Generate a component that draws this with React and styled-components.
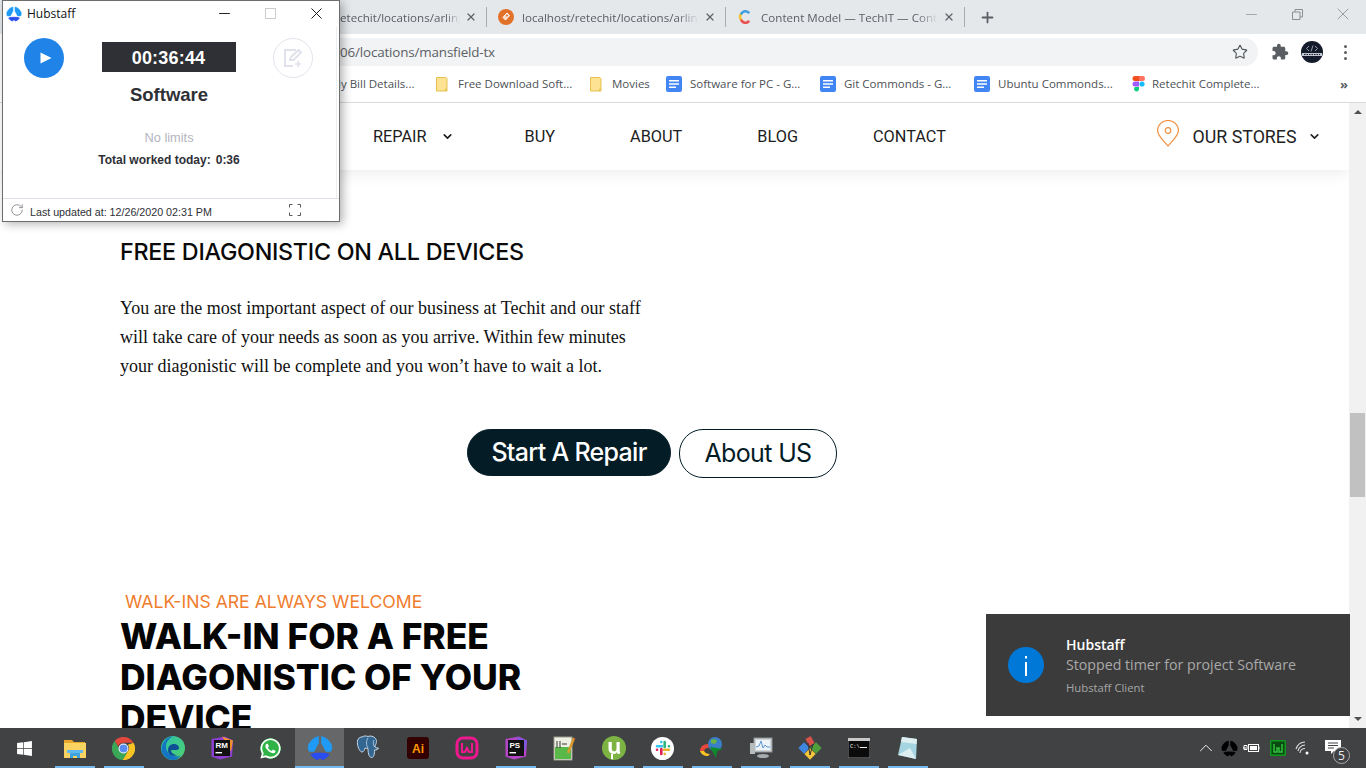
import React from "react";
import styled, { createGlobalStyle } from "styled-components";
import { ChevronDown, ChevronUp, Star, Plus, X, Minus, RotateCw } from "lucide-react";
import { FaWhatsapp, FaWindows } from "react-icons/fa";

const Global = createGlobalStyle`
  html, body { margin: 0; padding: 0; width: 1366px; height: 768px; overflow: hidden; background: #fff; }
  * { box-sizing: border-box; }
`;

const Screen = styled.div`
  position: relative; width: 1366px; height: 768px; overflow: hidden;
  display: flex; flex-direction: column; background: #fff;
  font-family: "Open Sans", sans-serif;
`;
/* Browser chrome */
const TabStrip = styled.div`
  height: 34px; background: #e5e8eb; display: flex; align-items: center; flex: none; padding-left: 340px;
`;
const Tab = styled.div`
  width: ${p => p.$w ?? 238}px; height: 34px; display: flex; align-items: center; flex: none;
  padding: 0 8px 0 ${p => p.$pad ?? 11}px; color: #5a5e63;
`;
const TabSep = styled.div`
  width: 1px; height: 20px; flex: none; background: #a8acb0; margin-top: -1px;
`;
const TabTitle = styled.span`
  margin-left: ${p => p.$gap ?? 0}px; flex: 1; min-width: 0; white-space: nowrap; font-size: 11.6px;
  -webkit-mask-image: linear-gradient(90deg, #000 88%, transparent 100%);
  mask-image: linear-gradient(90deg, #000 88%, transparent 100%);
`;
const TabClose = styled.span`
  display: flex; color: #5f6368; margin: 0 1px 0 5px; width: 12px; flex: none;
`;
const NewTab = styled.div`
  display: flex; color: #5a5e63; margin-left: 14px;
`;
const WinControls = styled.div`
  margin-left: auto; display: flex; align-items: center; height: 30px; margin-top: -6px; color: #8a8d90;
`;
const WinBtn = styled.div`
  width: 46px; display: flex; justify-content: center; align-items: center;
`;
const Toolbar = styled.div`
  height: 33px; background: #fff; display: flex; align-items: center; flex: none; padding: 0 12px 0 84px;
`;
const Omnibox = styled.div`
  width: 1174px; height: 28px; margin-top: 3px; border-radius: 14px; background: #f1f3f4; flex: none;
  display: flex; align-items: center; padding: 0 8px 0 256px; color: #5b5f64;
  font: 13.4px "Open Sans", sans-serif; letter-spacing: -0.15px;
`;
const OmniStar = styled.span`
  margin-left: auto; display: flex; color: #55595e; margin-right: 2px;
`;
const ToolIcons = styled.div`
  display: flex; align-items: center; margin-left: 13px; margin-top: 3px; color: #5a5e63;
`;
const Avatar = styled.div`
  width: 22px; height: 22px; border-radius: 50%; background: #141c2c; margin-left: 12px; overflow: hidden; display: flex;
`;
const Dots = styled.div`
  margin-left: 21px; display: flex; flex-direction: column; gap: 3px;
  & > i { width: 3px; height: 3px; border-radius: 50%; background: #5a5e63; display: block; }
`;
const Bookmarks = styled.div`
  height: 36px; flex: none; background: #fff; border-bottom: 1px solid #d9dadb;
  display: flex; align-items: center; padding: 0 19px 2px 338px;
  font: 11.5px "Open Sans", sans-serif; color: #4d5156;
`;
const Bookmark = styled.div`
  width: ${p => p.$w}px; flex: none; display: flex; align-items: center; white-space: nowrap; gap: ${p => p.$gap ?? 8}px;
`;
const MoreMarks = styled.div`
  margin-left: auto; color: #5a5e63; font-size: 13px; font-weight: 700; letter-spacing: -1px;
`;
/* Page */
const Viewport = styled.div`
  flex: 1; min-height: 0; display: flex;
`;
const Page = styled.div`
  flex: 1; min-width: 0; overflow: hidden; display: flex; flex-direction: column;
`;
const Nav = styled.nav`
  height: 67px; flex: none; display: flex; align-items: center; padding: 0 28px 0 373px; gap: 75px;
  box-shadow: 0 4px 14px rgba(0,0,0,.07); font: 16.3px Roboto, sans-serif; color: #1d1d1d;
`;
const NavItem = styled.div`
  display: flex; align-items: center; gap: 14px; white-space: nowrap;
  & > svg { margin-right: -4px; }
`;
const Stores = styled.div`
  margin-left: auto; display: flex; align-items: center; font-size: 17.8px; color: #222;
`;
const PinIcon = styled.svg`
  margin-top: -6px; flex: none;
`;
const StoreLabel = styled.span`
  margin: 0 11.5px 0 14px;
`;
const Section = styled.section`
  padding: 64px 0 0 120px;
`;
const SubHead = styled.h3`
  margin: 0; font: 500 23.3px/36px Inter, sans-serif; color: #0a0a0a; white-space: nowrap; letter-spacing: -0.26px;
`;
const Para = styled.p`
  margin: 24px 0 0; width: 540px; font: 18px/29px "Liberation Serif", serif; color: #111;
`;
const Actions = styled.div`
  display: flex; align-items: flex-start; gap: 8px; margin: 48px 0 0 347px;
`;
const Pill = styled.div`
  height: ${p => (p.$solid ? 47 : 49)}px; width: ${p => (p.$solid ? 204 : 158)}px; border-radius: 24px;
  border: 1px solid #031c26; background: ${p => (p.$solid ? "#031c26" : "#fff")};
  color: ${p => (p.$solid ? "#fff" : "#031c26")}; padding-bottom: 2px;
  display: flex; align-items: center; justify-content: center;
  font: ${p => (p.$solid ? 500 : 400)} 25px Inter, sans-serif; letter-spacing: ${p => (p.$solid ? -0.7 : -0.65)}px;
`;
const Kicker = styled.div`
  margin: 113px 0 0 5px; font: 17.6px/22px Inter, sans-serif; color: #ef7d2d; white-space: nowrap;
`;
const BigHead = styled.h2`
  margin: 3px 0 0; width: 440px; font: 800 35.4px/41px Inter, sans-serif; color: #050505;
`;
/* Scrollbar */
const ScrollBar = styled.div`
  width: 17px; flex: none; background: #f1f1f1; display: flex; flex-direction: column; align-items: center;
`;
const Arrow = styled.div`
  width: 0; height: 0; flex: none; border-left: 4px solid transparent; border-right: 4px solid transparent;
  ${p => p.$down ? "border-top: 4px solid #505050; margin: auto 0 7px;" : "border-bottom: 4px solid #505050; margin-top: 7px;"}
`;
const Thumb = styled.div`
  width: 15px; height: 84px; flex: none; background: #c1c1c1; margin-top: 299px;
`;
/* Taskbar */
const Taskbar = styled.div`
  height: 40px; flex: none; background: #404244; display: flex; align-items: stretch; color: #fff;
`;
const Start = styled.div`
  width: 50px; display: flex; align-items: center; justify-content: center; padding-right: 2px;
`;
const TaskItem = styled.div`
  width: 49px; position: relative; display: flex; align-items: center; justify-content: center;
  background: ${p => (p.$active ? "#656768" : "transparent")};
  &::after {
    content: ""; position: absolute; bottom: 0; height: 2px; background: #76b9ed;
    left: ${p => (p.$active ? 0 : 4.5)}px; right: ${p => (p.$active ? 0 : 4.5)}px;
    display: ${p => (p.$open ? "block" : "none")};
  }
`;
const Tray = styled.div`
  margin-left: auto; display: flex; align-items: center; padding-right: 15px;
`;
const TraySlot = styled.div`
  width: ${p => p.$w}px; display: flex; justify-content: center; align-items: center; position: relative;
`;
const NotifGlyph = styled.svg`
  margin-top: -2px;
`;
const NotifBadge = styled.span`
  position: absolute; right: 1px; bottom: -9px; width: 17px; height: 17px; border-radius: 50%;
  border: 1px solid #aaa; background: #404244; color: #eee; font: 12px/15px "Open Sans", sans-serif; text-align: center;
`;
const WaBadge = styled.div`
  width: 23px; height: 23px; border-radius: 50%; display: flex; align-items: center; justify-content: center;
  background: radial-gradient(circle, #2fb344 62%, transparent 64%);
`;
const SlackBadge = styled.div`
  width: 23px; height: 23px; border-radius: 50%; background: #fff; display: flex; align-items: center; justify-content: center;
`;
/* Toast */
const Toast = styled.div`
  position: absolute; right: 16px; bottom: 52px; width: 364px; height: 102px; background: #3b3b3b;
  display: flex; align-items: center; padding-left: 22px;
`;
const ToastBody = styled.div`
  margin-left: 22px; display: flex; flex-direction: column; font-family: "Open Sans", sans-serif;
`;
const ToastTitle = styled.div`
  font-size: 14px; font-weight: 600; line-height: 20px; color: #fff;
`;
const ToastText = styled.div`
  font-size: 14.2px; line-height: 20px; color: #a9a9a9;
`;
const ToastApp = styled.div`
  font-size: 11.3px; line-height: 16px; color: #a6a6a6; margin-top: 5px;
`;
/* Hubstaff window */
const HubWindow = styled.div`
  position: absolute; left: 2px; top: 0; width: 338px; height: 222px; background: #fff;
  border: 1px solid #6d6d6d; display: flex; flex-direction: column; padding-bottom: 1px;
  box-shadow: 3px 2px 9px rgba(0,0,0,.3); font-family: "Liberation Sans", sans-serif; color: #2e3036;
`;
const HubTitle = styled.div`
  height: 25px; flex: none; display: flex; align-items: center; padding-left: 3px; font: 12px "Open Sans", sans-serif; color: #111;
`;
const HubName = styled.span`
  margin-left: 5px;
`;
const HubControls = styled.div`
  margin-left: auto; display: flex; align-items: center; color: #111;
`;
const HubCtl = styled.div`
  width: 46px; display: flex; justify-content: center;
`;
const HubBody = styled.div`
  flex: 1; margin: 0 2px 0 0; padding-right: 1px; border-right: 1px solid #eceef2; display: flex; flex-direction: column; align-items: center;
`;
const HubTop = styled.div`
  width: 100%; display: flex; align-items: center; justify-content: space-between; padding: 12px 22px 0 21px;
`;
const CircleBtn = styled.div`
  width: 40px; height: 40px; border-radius: 50%; display: flex; align-items: center; justify-content: center;
  background: ${p => (p.$primary ? "#1f83e8" : "#fff")}; border: ${p => (p.$primary ? "none" : "1px solid #e1e4ec")};
  padding-left: ${p => (p.$primary ? 4 : 0)}px;
`;
const Timer = styled.div`
  width: 134px; height: 30px; background: #2e3036; color: #fff; font-weight: 700; font-size: 18px; margin-bottom: 2px; padding-top: 3px;
  display: flex; align-items: center; justify-content: center; letter-spacing: .2px;
`;
const Project = styled.div`
  font-size: 18.5px; font-weight: 700; line-height: 22px; margin-top: 6px;
`;
const Limits = styled.div`
  font-size: 12.8px; line-height: 14px; color: #b2b5bd; margin-top: 25px;
`;
const Worked = styled.div`
  font-size: 12px; font-weight: 700; line-height: 14px; margin-top: 8px; display: flex; gap: 5px;
`;
const HubFooter = styled.div`
  height: 22px; flex: none; border-top: 1px solid #dde0e6; display: flex; align-items: center; padding: 1px 38px 0 7px;
  font-size: 10.7px; color: #2e3036;
`;
const Updated = styled.span`
  margin-left: 6px; margin-top: 4px; white-space: nowrap;
`;
const Expand = styled.span`
  margin-left: auto; display: flex;
`;

const HubLogo = ({ size = 16, top = "#1f9bf5", bottom = "#2a4df0" }) => (
  <svg width={size} height={size} viewBox="0 0 24 24" strokeLinejoin="round">
    <path d="M10.500 1.500C7 2 4 4.500 1.500 9 1 11 1 13 2 15L6.500 15 10.500 7.500Z" fill={top} stroke={top} strokeWidth=".8" />
    <path d="M13.500 1.500C17 2 20 4.500 22.500 9 23 11 23 13 22 15L17.500 15 13.500 7.500Z" fill={top} stroke={top} strokeWidth=".8" />
    <path d="M4 18 8 17 16 17 20 18 18 20.500 14.500 22.500 12 20.500 9.500 22.500 6 20.500Z" fill={bottom} stroke={bottom} strokeWidth="1.200" />
  </svg>
);
const Doc = () => (
  <svg width="16" height="16" viewBox="0 0 16 16"><rect width="16" height="16" rx="2" fill="#4285f4" /><path d="M3 4h10v1.600H3zM3 7.200h10v1.600H3zM3 10.400h7V12H3z" fill="#fff" /></svg>
);
const Folder = () => (
  <svg width="16" height="16" viewBox="0 0 16 16"><path d="M.5 1.500h9.500l1 1v12.500H.5z" fill="#fde293" stroke="#e6c14f" /><path d="M9.500 15v-2h1.500" fill="none" stroke="#e6c14f" /></svg>
);
const Figma = () => (
  <svg width="16" height="16" viewBox="0 0 12 16">
    <path d="M2 0h4v5H2a2.500 2.500 0 010-5z" fill="#f24e1e" /><path d="M6 0h3.500a2.500 2.500 0 010 5H6z" fill="#ff7262" />
    <path d="M2 5.500h4v5H2a2.500 2.500 0 010-5z" fill="#a259ff" /><circle cx="9" cy="8" r="2.600" fill="#1abcfe" />
    <path d="M2 11h4v2.500a2.500 2.500 0 11-4-2.500z" fill="#0acf83" />
  </svg>
);
const XamppFav = () => (
  <svg width="16" height="16" viewBox="0 0 16 16"><circle cx="8" cy="8" r="8" fill="#e2722a" /><path d="M5 8.500 9 4l2.500 2.500L7.500 11z" fill="#f7d9c2" stroke="#fff" strokeWidth="1" /><circle cx="9" cy="6.500" r="1" fill="#e2722a" /></svg>
);
const ContentfulFav = () => (
  <svg width="14" height="14" viewBox="0 0 14 14" fill="none" strokeWidth="2.500" strokeLinecap="round">
    <path d="M3 9.500A4.500 4.500 0 013 4" stroke="#f2c230" /><path d="M3.500 3.500A4.500 4.500 0 0110.500 2.500" stroke="#3c9fe0" /><path d="M3.500 10.500A4.500 4.500 0 0010.500 11.500" stroke="#e8504f" />
  </svg>
);
const ExtensionIcon = () => (
  <svg width="18" height="18" viewBox="0 0 24 24" fill="currentColor">
    <path d="M20.500 11H19V7c0-1.100-.9-2-2-2h-4V3.500C13 2.120 11.880 1 10.500 1S8 2.120 8 3.500V5H4c-1.100 0-1.990.9-1.990 2v3.800H3.500c1.490 0 2.700 1.210 2.700 2.700s-1.210 2.700-2.700 2.700H2V20c0 1.100.9 2 2 2h3.800v-1.500c0-1.490 1.210-2.700 2.700-2.700 1.490 0 2.700 1.210 2.700 2.700V22H17c1.100 0 2-.9 2-2v-4h1.500c1.380 0 2.500-1.120 2.500-2.500S21.880 11 20.500 11z" />
  </svg>
);
const AvatarArt = () => (
  <svg width="22" height="22" viewBox="0 0 22 22">
    <path d="M8 5 5.500 7.500 8 10M14 5 16.500 7.500 14 10M12 4.500l-2 6" stroke="#cdd3dd" strokeWidth=".7" fill="none" />
    <rect x="1" y="12" width="20" height="3" fill="#dfe3ea" opacity=".85" />
    <path d="M3 13.500h16" stroke="#141c2c" strokeWidth="1.200" strokeDasharray="1.500 1" />
  </svg>
);
const PinGlyph = () => (
  <PinIcon width="22" height="27" viewBox="0 0 22 27" fill="none" stroke="#f08f3e" strokeWidth="1.200">
    <path d="M11 26C7 21 .6 16 .6 10.500a10.400 10 0 0120.800 0C21.400 16 15 21 11 26z" /><circle cx="11" cy="10.500" r="2.800" />
  </PinIcon>
);
const Explorer = () => (
  <svg width="24" height="24" viewBox="0 0 24 24">
    <path d="M1 4h8l2 2h11v3H1z" fill="#e8a92b" /><rect x="1" y="7" width="22" height="15" fill="#fbd360" />
    <path d="M7 17h10v5h-3v-2h-4v2H7z" fill="#3fa3e0" /><rect x="4" y="14" width="16" height="3" fill="#5fb9ec" />
  </svg>
);
const Chrome = () => (
  <svg width="23" height="23" viewBox="0 0 24 24">
    <path d="M12 0a12 12 0 0110.400 6H12a6 6 0 00-5.600 3.800L2.800 4.200A12 12 0 0112 0z" fill="#e4483c" />
    <path d="M22.400 6A12 12 0 0111 24l5.200-8.500A6 6 0 0016.500 8z" fill="#f9c423" />
    <path d="M11 24A12 12 0 012.800 4.200L8 13a6 6 0 008.200 2.500z" fill="#3aa757" />
    <circle cx="12" cy="12" r="5.200" fill="#fff" /><circle cx="12" cy="12" r="4.200" fill="#5a8bf0" />
  </svg>
);
const Edge = () => (
  <svg width="24" height="24" viewBox="0 0 24 24">
    <defs><linearGradient id="eg" x1="0" y1="0" x2="1" y2="1"><stop offset="0" stopColor="#2bc2a8" /><stop offset="1" stopColor="#4fd06f" /></linearGradient></defs>
    <circle cx="12" cy="12" r="12" fill="url(#eg)" />
    <path d="M0.500 13C1 6 6 .5 12 .5c-4 2-7 5-7 10 0 6 5 10 11 10 2 0 3-.5 4-1-2.500 3-5 4.500-8 4.500-6 0-11.500-5-11.500-11z" fill="#1475c4" />
    <path d="M7 14c0-4 3-6 6-6 3 0 5 2 5 4 0 1-1 2-3 2H10c0 3 3 5 7 5-5 2-10 0-10-5z" fill="#0f4f96" />
  </svg>
);
const JetBrains = ({ label, c1, c2 }) => (
  <svg width="24" height="24" viewBox="0 0 24 24">
    <path d="M1.500 3 15 .5l8 4-1 16-12 3-8.500-3z" fill={c1} /><path d="M12 .5l11 4-2 11z" fill={c2} />
    <rect x="4" y="4" width="16" height="16" fill="#111" />
    <text x="5.500" y="12" fill="#fff" fontSize="8" fontWeight="700" fontFamily="Liberation Sans">{label}</text>
    <rect x="5.500" y="16" width="6.500" height="1.400" fill="#fff" />
  </svg>
);
const Illustrator = () => (
  <svg width="22" height="22" viewBox="0 0 22 22"><rect width="22" height="22" rx="3" fill="#320000" /><text x="11" y="15.500" textAnchor="middle" fill="#ff9a00" fontSize="12" fontWeight="700" fontFamily="Liberation Sans">Ai</text></svg>
);
const Elephant = () => (
  <svg width="25" height="26" viewBox="0 0 25 26">
    <path d="M6 2C2.500 2 1 5 1.500 9c.5 4 2.500 8 4.500 8 1.500 0 2.500-2 3-4 1 .5 2 .5 3 .5 0 3 .5 9 3.500 9 2.500 0 3-3.500 3-7.500 2 0 3.500-.5 4-2-2 0-3.500 0-3.500-2 1-2 2.500-5 .5-7.500C17.500 1 14 .5 12 1.500 10 .5 7.500 1 6 2z" fill="#336791" stroke="#c9d8e8" strokeWidth="1" />
    <path d="M12 3c-2 3-2 7 0 10M18 5c-1 2-1 4 .5 7" fill="none" stroke="#c9d8e8" strokeWidth=".8" />
  </svg>
);
const Wamp = () => (
  <svg width="24" height="24" viewBox="0 0 24 24"><rect x="2" y="2" width="20" height="20" rx="6" fill="none" stroke="#f0188f" strokeWidth="3" /><path d="M7 7v9h3l2-4 2 4h3V7" fill="none" stroke="#f0188f" strokeWidth="2" /></svg>
);
const NotepadPP = () => (
  <svg width="24" height="26" viewBox="0 0 24 26">
    <rect x="1" y="2" width="18" height="23" fill="#eef0e4" stroke="#9a9a88" /><rect x="2" y="12" width="16" height="12" fill="#58b848" />
    <path d="M4 6v7M7 6v7M9 9h5" stroke="#333" strokeWidth="1" /><path d="M21 3 15 18" stroke="#d89a2c" strokeWidth="2.500" /><path d="M21 3l1.500.6-1 1.800z" fill="#d8443c" />
  </svg>
);
const Torrent = () => (
  <svg width="24" height="24" viewBox="0 0 24 24">
    <circle cx="12" cy="12" r="12" fill="#7cb342" />
    <path d="M6.500 6v7a5 5 0 005 5c2 0 3-1 3.500-2l.5 2 3-.5c-.5-1-.8-2-.8-4V6h-3.200v7c0 1.500-1 2.300-2.300 2.300S9.800 14.500 9.800 13V6z" fill="#fff" />
    <path d="M9 18v5l2 .5V18z" fill="#fff" />
  </svg>
);
const SlackGlyph = () => (
  <svg width="16" height="16" viewBox="0 0 16 16" fill="none" strokeWidth="2.600" strokeLinecap="round">
    <path d="M2 6.300h5M6.300 2v.1" stroke="#36c5f0" /><path d="M9.700 2v5M14 6.300h-.1" stroke="#2eb67d" />
    <path d="M14 9.700H9M9.700 14v-.1" stroke="#ecb22e" /><path d="M6.300 14V9M2 9.700h.1" stroke="#e01e5a" />
  </svg>
);
const Idm = () => (
  <svg width="26" height="24" viewBox="0 0 26 24">
    <path d="M1 15c0-4 3-7 8-7l4 3-5 1c-2 .5-3 2-3 4z" fill="#e4483c" /><path d="M1 15c1 3 4 5 8 5l2-2c-3 0-5-1-6-3z" fill="#f9c423" />
    <circle cx="16" cy="8" r="7" fill="#3a7fc8" /><path d="M12 4c2-1 5-1 6 1l-2 3-4-1z" fill="#6cb33f" />
    <path d="M11 11l13 2-6 2-1 7z" fill="#0c8c2c" />
  </svg>
);
const Monitor = () => (
  <svg width="24" height="24" viewBox="0 0 24 24">
    <rect x="5" y="2" width="18" height="14" fill="#cfd4d8" stroke="#8c9296" /><rect x="7" y="4" width="14" height="10" fill="#eef3f7" />
    <path d="M7 11l3-1 2-5 2 7 2-3 2 2h3" fill="none" stroke="#4a8fd0" strokeWidth=".9" />
    <rect x="1" y="7" width="5" height="11" fill="#b6bbbe" /><ellipse cx="14" cy="20" rx="6" ry="2" fill="#a7acaf" />
  </svg>
);
const GitGui = () => (
  <svg width="26" height="26" viewBox="0 0 26 26">
    <rect x="3" y="9" width="8" height="8" transform="rotate(45 7 13)" fill="#3f86e0" /><rect x="15" y="9" width="8" height="8" transform="rotate(45 19 13)" fill="#4f9e3c" />
    <rect x="9" y="15" width="8" height="8" transform="rotate(45 13 19)" fill="#f2c53a" /><rect x="10" y="2" width="6" height="8" transform="rotate(-30 13 6)" fill="#d8524a" />
    <path d="M11 8 13 20M16 9 13 20" stroke="#333" strokeWidth="1" />
  </svg>
);
const Cmd = () => (
  <svg width="22" height="20" viewBox="0 0 22 20">
    <rect width="22" height="20" fill="#0b0b0b" stroke="#8a8a8a" /><rect width="22" height="3" fill="#c9c9c9" />
    <text x="2" y="10" fill="#eee" fontSize="5.500" fontFamily="Liberation Mono">C:\</text><rect x="12" y="9" width="7" height="1" fill="#eee" />
  </svg>
);
const StickyNote = () => (
  <svg width="24" height="24" viewBox="0 0 24 24">
    <path d="M6 1 21 3 20 23 2 19z" fill="#a5d5e0" /><path d="M6 1 21 3 20.500 8 5 6z" fill="#dfeef0" /><path d="M2 19 20 23 14 12z" fill="#e8f4f6" opacity=".8" />
  </svg>
);
const PlayTri = () => (
  <svg width="12" height="12" viewBox="0 0 12 12"><path d="M0.500 0.500 11.500 6 0.500 11.500Z" fill="#fff" /></svg>
);
const NoteAdd = () => (
  <svg width="20" height="20" viewBox="0 0 20 20" fill="none" stroke="#dfe2ea" strokeWidth="2">
    <path d="M13 2H2v16h8" /><path d="M7 12l1-3 7.500-7 2.500 2.500-7.500 7.500z" /><path d="M15 13v6M12 16h6" strokeWidth="1.600" />
  </svg>
);
const ExpandIcon = () => (
  <svg width="12" height="12" viewBox="0 0 12 12" fill="none" stroke="#555a60"><path d="M.5 3.500v-3h3M8.500.5h3v3M11.500 8.500v3h-3M3.500 11.500h-3v-3" /></svg>
);
const InfoCircle = () => (
  <svg width="36" height="36" viewBox="0 0 36 36"><circle cx="18" cy="18" r="18" fill="#0078d7" /><rect x="17" y="15" width="2" height="14" fill="#fff" /><rect x="17" y="9" width="2" height="2.500" fill="#fff" /></svg>
);
const Battery = () => (
  <svg width="17" height="12" viewBox="0 0 17 12" fill="none" stroke="#fff"><rect x="5.500" y="2.500" width="10" height="7" /><rect x="7" y="4" width="7" height="4" fill="#fff" stroke="none" /><path d="M16 4.500v3M0 6h3M1 3.500h3v4H1z" /></svg>
);
const WampTray = () => (
  <svg width="16" height="16" viewBox="0 0 16 16"><rect width="16" height="16" rx="1.500" fill="#0f9a1e" /><rect x="1.500" y="1.500" width="13" height="13" fill="#0a4a10" /><path d="M4 4v8h3V8h2v4h3V4" fill="none" stroke="#33c03f" strokeWidth="1.500" /></svg>
);
const Wifi = () => (
  <svg width="16" height="16" viewBox="0 0 16 16" fill="none" stroke="#ddd" strokeWidth="1.100">
    <path d="M1 9a10 10 0 0 1 9-7M3 11a8 8 0 0 1 7-6M5 13a5 5 0 0 1 5-4.500" /><circle cx="12" cy="13" r="1.500" fill="#fff" stroke="none" />
  </svg>
);
const NotifIcon = () => (
  <NotifGlyph width="16" height="16" viewBox="0 0 16 16"><path d="M0 1h16v11H9l-3 3v-3H0z" fill="#fff" /><path d="M3 4h10M3 6.500h10M3 9h6" stroke="#404244" /></NotifGlyph>
);

const tasks = [
  [<Explorer />, true], [<Chrome />, true], [<Edge />, false], [<JetBrains label="RM" c1="#8e3fd0" c2="#f0902a" />, false],
  [<WaBadge><FaWhatsapp size={23} color="#fff" /></WaBadge>, false], [<HubLogo size={26} />, true, true],
  [<Elephant />, false], [<Illustrator />, false], [<Wamp />, false],
  [<JetBrains label="PS" c1="#b345c6" c2="#7a5ae0" />, true], [<NotepadPP />, false], [<Torrent />, true],
  [<SlackBadge><SlackGlyph /></SlackBadge>, true], [<Idm />, true], [<Monitor />, true],
  [<GitGui />, true], [<Cmd />, true], [<StickyNote />, true],
];

const marks = [
  { label: "ly Bill Details...", w: 98 },
  { icon: <Folder />, label: "Free Download Soft...", w: 154, gap: 6 },
  { icon: <Folder />, label: "Movies", w: 76, gap: 6 },
  { icon: <Doc />, label: "Software for PC - G...", w: 154 },
  { icon: <Doc />, label: "Git Commonds - G...", w: 154 },
  { icon: <Doc />, label: "Ubuntu Commonds...", w: 157 },
  { icon: <Figma />, label: "Retechit Complete...", w: 150, gap: 5 },
];

export default function App() {
  return (
    <Screen>
      <Global />
      <TabStrip>
        <Tab $w={146} $pad={0}>
          <TabTitle>etechit/locations/arling</TabTitle>
          <TabClose><X size={12} strokeWidth={2.5} /></TabClose>
        </Tab>
        <TabSep />
        <Tab>
          <XamppFav /><TabTitle $gap={8}>localhost/retechit/locations/arling</TabTitle>
          <TabClose><X size={12} strokeWidth={2.5} /></TabClose>
        </Tab>
        <TabSep />
        <Tab $pad={12}>
          <ContentfulFav /><TabTitle $gap={9}>Content Model — TechIT — Cont</TabTitle>
          <TabClose><X size={12} strokeWidth={2.5} /></TabClose>
        </Tab>
        <TabSep />
        <NewTab><Plus size={17} strokeWidth={2.5} /></NewTab>
        <WinControls>
          <WinBtn><Minus size={17} strokeWidth={1} /></WinBtn>
          <WinBtn><svg width="11" height="11" viewBox="0 0 11 11" fill="none" stroke="currentColor"><path d="M.5 3h7.500v7.500H.5zM3 3V.5h7.500V8H8" /></svg></WinBtn>
          <WinBtn><X size={20} strokeWidth={1} /></WinBtn>
        </WinControls>
      </TabStrip>
      <Toolbar>
        <Omnibox>
          06/locations/mansfield-tx
          <OmniStar><Star size={16} strokeWidth={1.7} /></OmniStar>
        </Omnibox>
        <ToolIcons>
          <ExtensionIcon />
          <Avatar><AvatarArt /></Avatar>
          <Dots><i /><i /><i /></Dots>
        </ToolIcons>
      </Toolbar>
      <Bookmarks>
        {marks.map(m => (
          <Bookmark key={m.label} $w={m.w} $gap={m.gap}>{m.icon}{m.label}</Bookmark>
        ))}
        <MoreMarks>»</MoreMarks>
      </Bookmarks>
      <Viewport>
        <Page>
          <Nav>
            <NavItem>REPAIR <ChevronDown size={13} strokeWidth={3} /></NavItem>
            <NavItem>BUY</NavItem>
            <NavItem>ABOUT</NavItem>
            <NavItem>BLOG</NavItem>
            <NavItem>CONTACT</NavItem>
            <Stores>
              <PinGlyph />
              <StoreLabel>OUR STORES</StoreLabel>
              <ChevronDown size={13} strokeWidth={3} />
            </Stores>
          </Nav>
          <Section>
            <SubHead>FREE DIAGONISTIC ON ALL DEVICES</SubHead>
            <Para>You are the most important aspect of our business at Techit and our staff will take care of your needs as soon as you arrive. Within few minutes your diagonistic will be complete and you won’t have to wait a lot.</Para>
            <Actions>
              <Pill $solid>Start A Repair</Pill>
              <Pill>About US</Pill>
            </Actions>
            <Kicker>WALK-INS ARE ALWAYS WELCOME</Kicker>
            <BigHead>WALK-IN FOR A FREE DIAGONISTIC OF YOUR DEVICE</BigHead>
          </Section>
        </Page>
        <ScrollBar>
          <Arrow />
          <Thumb />
          <Arrow $down />
        </ScrollBar>
      </Viewport>
      <Taskbar>
        <Start><FaWindows size={17} /></Start>
        {tasks.map(([icon, open, active], i) => (
          <TaskItem key={i} $open={open} $active={active}>{icon}</TaskItem>
        ))}
        <Tray>
          <TraySlot $w={31}><ChevronUp size={22} strokeWidth={1} /></TraySlot>
          <TraySlot $w={17}><HubLogo size={17} top="#000" bottom="#000" /></TraySlot>
          <TraySlot $w={27}><Battery /></TraySlot>
          <TraySlot $w={25}><WampTray /></TraySlot>
          <TraySlot $w={25}><Wifi /></TraySlot>
          <TraySlot $w={36}><NotifIcon /><NotifBadge>5</NotifBadge></TraySlot>
        </Tray>
      </Taskbar>
      <Toast>
        <InfoCircle />
        <ToastBody>
          <ToastTitle>Hubstaff</ToastTitle>
          <ToastText>Stopped timer for project Software</ToastText>
          <ToastApp>Hubstaff Client</ToastApp>
        </ToastBody>
      </Toast>
      <HubWindow>
        <HubTitle>
          <HubLogo size={16} />
          <HubName>Hubstaff</HubName>
          <HubControls>
            <HubCtl><Minus size={17} strokeWidth={1.3} /></HubCtl>
            <HubCtl><svg width="11" height="11" viewBox="0 0 11 11" fill="none" stroke="#ccc"><rect x=".5" y=".5" width="10" height="10" /></svg></HubCtl>
            <HubCtl><X size={19} strokeWidth={1.2} /></HubCtl>
          </HubControls>
        </HubTitle>
        <HubBody>
          <HubTop>
            <CircleBtn $primary><PlayTri /></CircleBtn>
            <Timer>00:36:44</Timer>
            <CircleBtn><NoteAdd /></CircleBtn>
          </HubTop>
          <Project>Software</Project>
          <Limits>No limits</Limits>
          <Worked><span>Total worked today:</span><span>0:36</span></Worked>
        </HubBody>
        <HubFooter>
          <RotateCw size={14} strokeWidth={1.4} color="#7d8187" />
          <Updated>Last updated at: 12/26/2020 02:31 PM</Updated>
          <Expand><ExpandIcon /></Expand>
        </HubFooter>
      </HubWindow>
    </Screen>
  );
}
